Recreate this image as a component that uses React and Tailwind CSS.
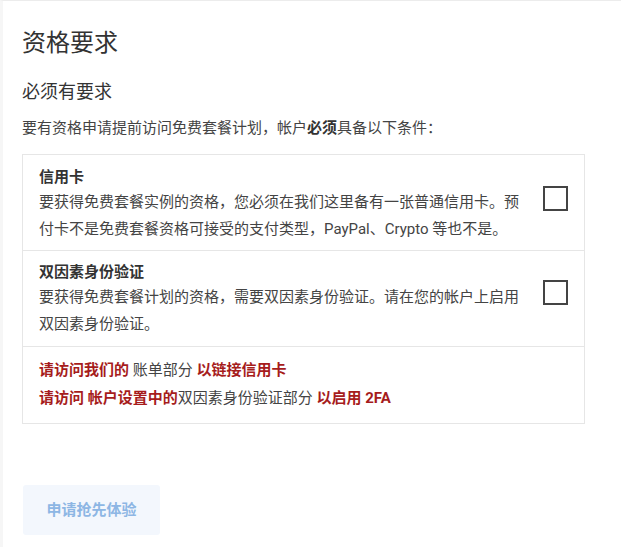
export default function App() {
    return (
        <div className="min-h-[547px] w-[621px] bg-white border-t border-[#ececec] border-l-[3px] border-l-[#f6f6f6] text-[#444] font-['Roboto','Noto_Sans_CJK_SC',sans-serif]">
            <div className="pl-[19px] pr-[36px] pt-[26px]">
                <h1 className="text-[24px] leading-[32px] text-[#333]">资格要求</h1>
                <h2 className="mt-[20px] text-[18px] leading-[26px] text-[#333]">必须有要求</h2>
                <p className="mt-[11px] text-[15px] leading-[24px]">
                    要有资格申请提前访问免费套餐计划，帐户<b className="font-bold text-[#333]">必须</b>具备以下条件：
                </p>

                <div className="mt-[14px] border border-[#e6e6e6]">
                    <div className="flex items-center border-b border-[#e6e6e6] pl-[16px] pr-[16px] pt-[10px] pb-[7px]">
                        <div className="flex-1 pr-[22px]">
                            <div className="text-[15px] leading-[24px] font-bold text-[#333]">信用卡</div>
                            <div className="text-[15px] leading-[27px]">
                                要获得免费套餐实例的资格，您必须在我们这里备有一张普通信用卡。预付卡不是免费套餐资格可接受的支付类型，PayPal、Crypto 等也不是。
                            </div>
                        </div>
                        <div className="w-[25px] h-[25px] border-2 border-[#444] -mt-[12px] shrink-0"></div>
                    </div>
                    <div className="flex items-center border-b border-[#e6e6e6] pl-[16px] pr-[16px] pt-[9px] pb-[8px]">
                        <div className="flex-1 pr-[22px]">
                            <div className="text-[15px] leading-[24px] font-bold text-[#333]">双因素身份验证</div>
                            <div className="text-[15px] leading-[27px]">
                                要获得免费套餐计划的资格，需要双因素身份验证。请在您的帐户上启用双因素身份验证。
                            </div>
                        </div>
                        <div className="w-[25px] h-[25px] border-2 border-[#444] -mt-[14px] shrink-0"></div>
                    </div>
                    <div className="pl-[16px] pr-[16px] pt-[9px] pb-[11px] text-[15px] leading-[28px]">
                        <div>
                            <span className="font-bold text-[#a61c1c]">请访问我们的</span> 账单部分 <span className="font-bold text-[#a61c1c]">以链接信用卡</span>
                        </div>
                        <div>
                            <span className="font-bold text-[#a61c1c]">请访问 帐户设置中的</span>双因素身份验证部分 <span className="font-bold text-[#a61c1c]">以启用 2FA</span>
                        </div>
                    </div>
                </div>

                <button className="mt-[61px] ml-[1px] w-[137px] h-[50px] bg-[#f3f7fd] rounded-[3px] text-[15px] font-bold text-[#8db6e4]">
                    申请抢先体验
                </button>
            </div>
        </div>
    );
}
